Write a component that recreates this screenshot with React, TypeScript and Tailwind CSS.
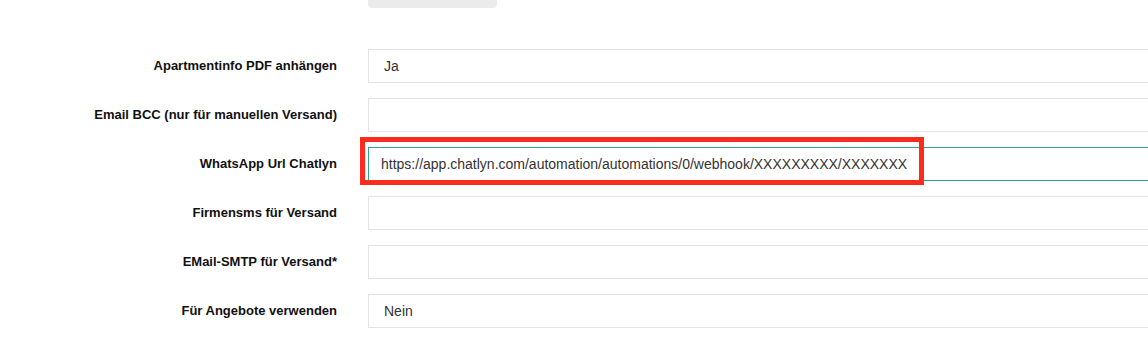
import React from "react";

const rows: { label: string; value: string; focused?: boolean }[] = [
  { label: "Apartmentinfo PDF anhängen", value: "Ja" },
  { label: "Email BCC (nur für manuellen Versand)", value: "" },
  {
    label: "WhatsApp Url Chatlyn",
    value: "https://app.chatlyn.com/automation/automations/0/webhook/XXXXXXXXX/XXXXXXX",
    focused: true,
  },
  { label: "Firmensms für Versand", value: "" },
  { label: "EMail-SMTP für Versand*", value: "" },
  { label: "Für Angebote verwenden", value: "Nein" },
];

export default function App() {
  return (
    <div
      className="w-[1148px] h-[341px] overflow-hidden bg-white"
      style={{ fontFamily: '"Liberation Sans", Arial, sans-serif' }}
    >
      <div className="flex">
        <div className="w-[368px] shrink-0" />
        <div className="w-[129px] h-[8px] bg-[#ebebeb] rounded-b-[4px]" />
      </div>
      <div className="mt-[41px] flex flex-col gap-[15px]">
        {rows.map((r) => (
          <div key={r.label} className="flex items-center">
            <div className="w-[337px] shrink-0 text-right text-[13px] font-bold text-[#111]">
              {r.label}
            </div>
            <div className="ml-[31px] relative">
              {r.focused && (
                <div className="absolute left-[-8px] top-[-10px] w-[564px] h-[48px] border-[5px] border-[#fb2b1e] z-10 pointer-events-none" />
              )}
              <div
                className={
                  "w-[820px] h-[34px] flex items-center text-[14px] text-[#333] " +
                  (r.focused
                    ? "border border-[#35a386] pl-[12px]"
                    : "border border-[#e3e3e3] pl-[15px]")
                }
              >
                {r.value}
              </div>
            </div>
          </div>
        ))}
      </div>
    </div>
  );
}
